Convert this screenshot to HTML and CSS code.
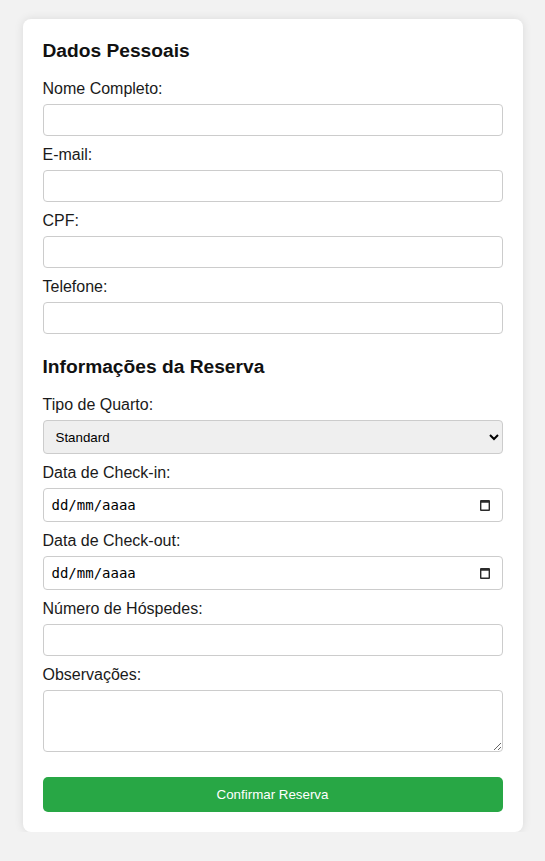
FILE: index.html
```html
<!DOCTYPE html>
<html lang="pt-BR">
<head>
<meta charset="utf-8">
<title>Reserva</title>
<link rel="stylesheet" href="styles.css">
</head>
<body>
<div class="card">
  <form class="form">
    <h2 class="section-title first">Dados Pessoais</h2>
    <div class="group">
      <label class="label" for="nome">Nome Completo:</label>
      <input class="field" id="nome" type="text">
    </div>
    <div class="group">
      <label class="label" for="email">E-mail:</label>
      <input class="field" id="email" type="text">
    </div>
    <div class="group">
      <label class="label" for="cpf">CPF:</label>
      <input class="field" id="cpf" type="text">
    </div>
    <div class="group">
      <label class="label" for="tel">Telefone:</label>
      <input class="field" id="tel" type="text">
    </div>

    <h2 class="section-title">Informações da Reserva</h2>
    <div class="group">
      <label class="label" for="tipo">Tipo de Quarto:</label>
      <select class="field select" id="tipo">
        <option>Standard</option>
        <option>Luxo</option>
        <option>Suíte</option>
      </select>
    </div>
    <div class="group">
      <label class="label">Data de Check-in:</label>
      <div class="field date" role="textbox">
        <span class="date-text">dd/mm/aaaa</span>
        <svg class="cal" width="10" height="11" viewBox="0 0 10 11" aria-hidden="true">
          <path fill-rule="evenodd" fill="#2b2b2b" d="M1 0h8a1 1 0 0 1 1 1v9a1 1 0 0 1-1 1h-8a1 1 0 0 1-1-1v-9a1 1 0 0 1 1-1zM1.4 2.8v6.8h7.2v-6.8z"/>
        </svg>
      </div>
    </div>
    <div class="group">
      <label class="label">Data de Check-out:</label>
      <div class="field date" role="textbox">
        <span class="date-text">dd/mm/aaaa</span>
        <svg class="cal" width="10" height="11" viewBox="0 0 10 11" aria-hidden="true">
          <path fill-rule="evenodd" fill="#2b2b2b" d="M1 0h8a1 1 0 0 1 1 1v9a1 1 0 0 1-1 1h-8a1 1 0 0 1-1-1v-9a1 1 0 0 1 1-1zM1.4 2.8v6.8h7.2v-6.8z"/>
        </svg>
      </div>
    </div>
    <div class="group">
      <label class="label" for="hospedes">Número de Hóspedes:</label>
      <input class="field" id="hospedes" type="number">
    </div>
    <div class="group">
      <label class="label" for="obs">Observações:</label>
      <textarea class="field textarea" id="obs"></textarea>
    </div>
    <button class="submit" type="button">Confirmar Reserva</button>
  </form>
</div>
</body>
</html>
```
FILE: styles.css
```css
html, body {
  margin: 0;
  padding: 0;
}
body {
  background: #f2f2f2;
  font-family: "Liberation Sans", Arial, sans-serif;
  padding-top: 19px;
}
.card {
  box-sizing: border-box;
  width: 500px;
  margin: 0 auto;
  background: #fff;
  border-radius: 8px;
  box-shadow: 0 0 10px rgba(0, 0, 0, 0.1);
  padding: 20px;
}
.form {
  display: flex;
  flex-direction: column;
}
.section-title {
  font-size: 19.2px;
  line-height: 23px;
  font-weight: bold;
  color: #111;
  margin: 11px 0 18px;
}
.section-title.first {
  margin-top: 0;
}
.group {
  margin-bottom: 10px;
  display: flex;
  flex-direction: column;
}
.label {
  display: block;
  font-size: 16px;
  line-height: 18px;
  color: #1a1a1a;
  margin-bottom: 6px;
}
.field {
  box-sizing: border-box;
  width: 100%;
  height: 32px;
  border: 1px solid #ccc;
  border-radius: 4px;
  padding: 8px;
  font-family: "Liberation Sans", Arial, sans-serif;
  font-size: 13.33px;
  background: #fff;
  margin: 0;
}
.select {
  height: 34px;
  background-color: #efefef;
  color: #000;
  padding: 8px;
}
.date {
  height: 34px;
  display: flex;
  align-items: center;
  justify-content: space-between;
  padding: 0 12px 0 8px;
  font-family: "DejaVu Sans Mono", monospace;
  font-size: 14px;
  color: #000;
}
.date-text {
  line-height: 16px;
}
.cal {
  display: block;
}
.textarea {
  height: 62px;
  resize: vertical;
}
.submit {
  margin-top: 15px;
  height: 35px;
  border: none;
  border-radius: 5px;
  background: #28a745;
  color: #fff;
  font-family: "Liberation Sans", Arial, sans-serif;
  font-size: 13.33px;
  cursor: pointer;
}
```
